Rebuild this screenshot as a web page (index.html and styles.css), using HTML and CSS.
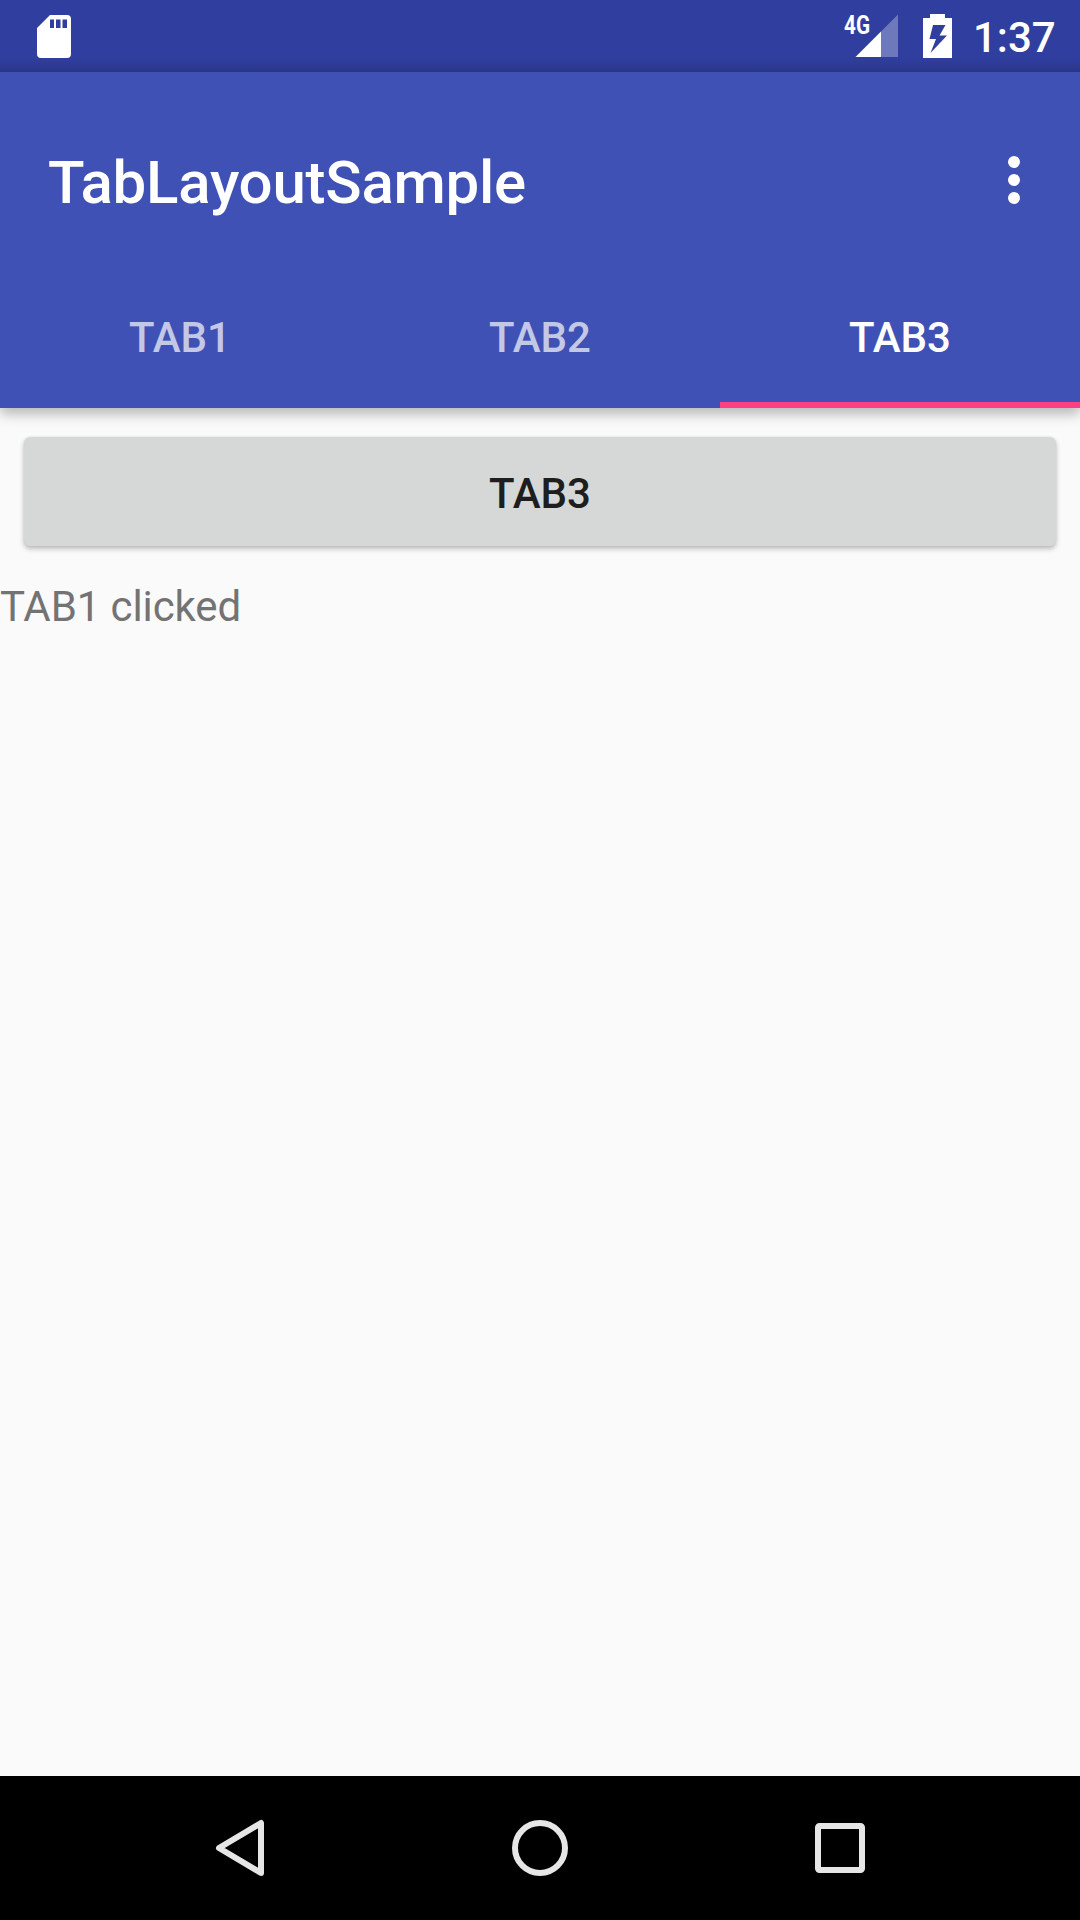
FILE: index.html
```html
<!DOCTYPE html>
<html lang="en">
<head>
<meta charset="utf-8">
<title>TabLayoutSample</title>
<link rel="stylesheet" href="styles.css">
</head>
<body>
<div class="screen">
  <div class="status-bar">
    <svg class="sd-card" width="34" height="43" viewBox="0 0 34 43">
      <path fill="#fff" fill-rule="evenodd" d="M13 0H30Q34 0 34 4V39Q34 43 30 43H4Q0 43 0 39V13ZM13 4.500V13H17V4.500ZM19 4.500V13H23.500V4.500ZM25.500 4.500V13H30V4.500Z"/>
    </svg>
    <div class="status-right">
      <svg class="signal" width="60" height="58" viewBox="-6 -14 60 58">
        <text class="network" x="-1" y="19.500" textLength="26" lengthAdjust="spacingAndGlyphs">4G</text>
        <path fill="#fff" fill-opacity=".3" d="M53 .5V43H36V17.500Z"/>
        <path fill="#fff" d="M36 17.500V43H10.500Z"/>
      </svg>
      <svg class="battery" width="29" height="44" viewBox="0 0 29 44">
        <path fill="#fff" fill-rule="evenodd" d="M7 0H22V4H29V44H0V4H7ZM10 11L6.500 25H13L7.500 39L24 21.500H16.500L22.500 11Z"/>
      </svg>
      <span class="clock">1:37</span>
    </div>
  </div>
  <header class="app-bar">
    <div class="toolbar">
      <h1 class="title">TabLayoutSample</h1>
      <svg class="overflow" width="12" height="48" viewBox="0 0 12 48" fill="#fff">
        <circle cx="6" cy="6" r="6"/><circle cx="6" cy="24" r="6"/><circle cx="6" cy="42" r="6"/>
      </svg>
    </div>
    <nav class="tabs">
      <div class="tab">TAB1</div>
      <div class="tab">TAB2</div>
      <div class="tab selected">TAB3</div>
    </nav>
  </header>
  <main class="content">
    <button class="button">TAB3</button>
    <p class="message">TAB1 clicked</p>
  </main>
  <footer class="nav-bar">
    <svg width="60" height="60" viewBox="0 0 60 60"><path d="M51 5V55L9 30Z"/></svg>
    <svg width="60" height="60" viewBox="0 0 60 60"><circle cx="30" cy="30" r="25"/></svg>
    <svg width="60" height="60" viewBox="0 0 60 60"><rect x="8" y="8" width="44" height="44" rx="1.500"/></svg>
  </footer>
</div>
</body>
</html>
```
FILE: styles.css
```css
* { box-sizing: border-box; }
body { margin: 0; }
.screen {
  display: flex;
  flex-direction: column;
  width: 1080px;
  height: 1920px;
  overflow: hidden;
  background: #fafafa;
  font-family: Roboto, sans-serif;
}
.status-bar {
  display: flex;
  justify-content: space-between;
  align-items: flex-start;
  height: 72px;
  padding: 0 24px 0 37px;
  background: linear-gradient(#303f9f 58px, #2c3a92 67px, #283583 72px);
}
.sd-card { margin-top: 15px; }
.status-right { display: flex; align-items: flex-start; }
.battery { margin: 14px 0 0 24px; }
.network { font: 700 26px Roboto, sans-serif; fill: #fff; }
.clock {
  width: 83px;
  margin: 14px 0 0 21px;
  font-size: 42px;
  font-weight: 500;
  line-height: 48px;
  color: #fff;
  white-space: nowrap;
}
.app-bar {
  height: 336px;
  background: #3f51b5;
  color: #fff;
  box-shadow: 0 6px 12px rgba(0, 0, 0, .27);
  clip-path: inset(0 0 -30px 0);
}
.toolbar {
  display: flex;
  justify-content: space-between;
  align-items: center;
  height: 192px;
  padding: 24px 60px 0 48px;
}
.title {
  margin: 0;
  padding-top: 5px;
  font-size: 60px;
  font-weight: 500;
  line-height: 70px;
  letter-spacing: -.23px;
}
.tabs { display: grid; grid-template-columns: repeat(3, 1fr); height: 144px; }
.tab {
  display: flex;
  align-items: center;
  justify-content: center;
  padding-top: 9px;
  border-bottom: 6px solid transparent;
  color: rgba(255, 255, 255, .7);
  font-size: 42px;
  font-weight: 500;
}
.tab.selected { color: #fff; border-color: #ff4081; }
.content { flex: 1; display: flex; flex-direction: column; padding-top: 29px; }
.button {
  height: 109px;
  margin: 0 24px;
  padding: 4px 0 0;
  border: 0;
  border-radius: 6px;
  background: #d6d8d7;
  box-shadow: 0 3px 5px rgba(0, 0, 0, .24), 0 0 3px rgba(0, 0, 0, .08);
  color: #1e1e1e;
  font: 500 42px/49px Roboto, sans-serif;
}
.message {
  margin: 36px 0 0;
  color: #737373;
  font-size: 42px;
  line-height: 49px;
  letter-spacing: -.1px;
}
.nav-bar {
  display: flex;
  align-items: center;
  justify-content: center;
  gap: 240px;
  height: 144px;
  background: #000;
}
.nav-bar svg { fill: none; stroke: #e6e6e6; stroke-width: 6; stroke-linejoin: round; }
```
